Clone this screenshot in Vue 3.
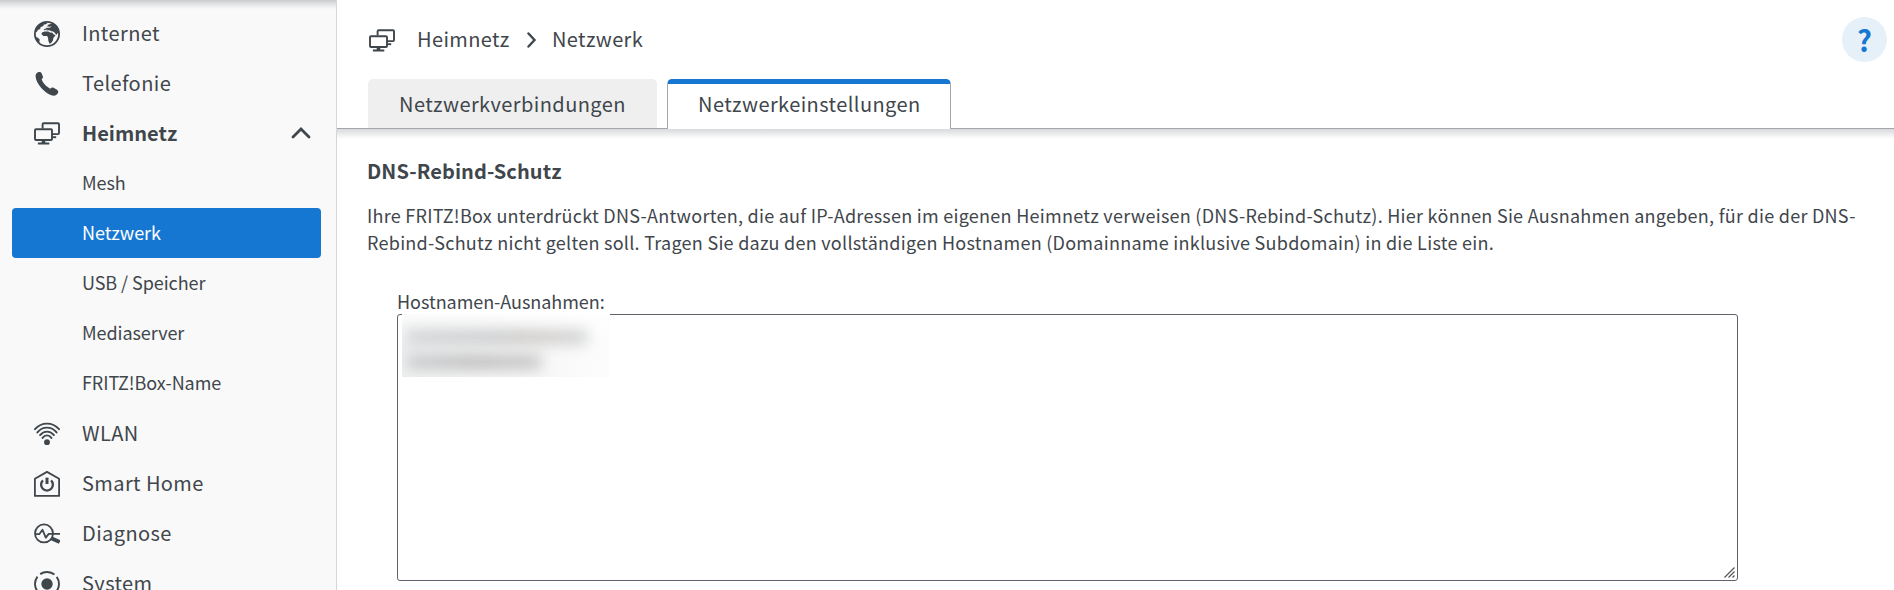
<script setup>
const before = [
  { label: 'Internet', icon: 'globe' },
  { label: 'Telefonie', icon: 'phone' },
  { label: 'Heimnetz', icon: 'screens', open: true },
]
const sub = ['Mesh', 'Netzwerk', 'USB / Speicher', 'Mediaserver', 'FRITZ!Box-Name']
const after = [
  { label: 'WLAN', icon: 'wifi' },
  { label: 'Smart Home', icon: 'home' },
  { label: 'Diagnose', icon: 'diagnose' },
  { label: 'System', icon: 'system' },
]
</script>

<template>
  <svg class="defs" width="0" height="0" aria-hidden="true">
    <symbol id="globe" viewBox="0 0 26 26">
      <circle cx="13" cy="13" r="12.1" fill="none" stroke="currentColor" stroke-width="1.8" />
      <path fill="currentColor" d="M3.2 5.7 7.2 2.3 11.5 1l2 1-1.5 1.3-2 .3-1 1.7-2.3.7-.5 2-2 .7L2.6 11 1 11.8zM1.2 15.8l2.7 1 1.8 1.8-.5 3.3-1.5-.7zM13.2 4l2.7-.8L19 1.6l3.6 3.1 2.3 4.4.5 3.7-2-.5-1.1 1.8-2.5-3.2-2.3-.4-1.6-1-2.4.3-1.4-.8-1.7.5-.7-1.3 2.8-1 .2-1.6 2.5.3z" />
      <path fill="currentColor" d="m8 11.6 2.700-1.200 3.500.2 1.800.8 2.400.300 1.600 2.100 1.700.200-2.300 3.100-.5 2.400-1.900 2.800-1.700.200-1-3-.2-2.700-1-1.800-3.800-.1L7.400 13z" />
      <path d="M10 9.400l3.100-.3 3 1 3.600 1 1.900 2.500" fill="none" stroke="#f9f9f9" stroke-width=".6" />
      <path d="m12.200 6.400 2.700.2 2.300-1" fill="none" stroke="#f9f9f9" stroke-width=".8" />
    </symbol>
    <symbol id="phone" viewBox="0 0 26 26">
      <path fill="currentColor" d="M2.200 2.800C3.800.6 6.600.3 7.700 2.400l1.200 3c.3 1.200-.3 1.900-1.300 2.900 1.200 3.600 4.600 7.400 8.600 9.400 1.200-1.100 2.200-1.600 3.400-1l3.400 2c1.800 1.200 1.700 3-.2 4.700-2 1.700-4.600 1.600-7.300.1C9.700 20.200 4.500 14.600 2.400 8.900 1.600 6.700 1.200 4.500 2.200 2.800z" />
    </symbol>
    <symbol id="screens" viewBox="0 0 26 26">
      <g fill="none" stroke="currentColor" stroke-width="1.9">
        <path d="M8.600 7.500V3.300q0-1 1-1h14.400q1 0 1 1v8.800q0 1-1 1h-5.700" />
        <rect x="1" y="8.300" width="17" height="10.700" rx="1" />
        <path d="M18.500 16.200h3.700" />
      </g>
      <path fill="currentColor" d="M7.700 19h3.600v2.500h4v1.900H3.900v-1.900h3.800z" />
    </symbol>
    <symbol id="wifi" viewBox="0 0 26 26">
      <circle cx="13" cy="21.200" r="2.900" fill="currentColor" />
      <g fill="none" stroke="currentColor" stroke-width="1.900" stroke-linecap="round">
        <path d="M1 8.200Q6 2.600 13 2.600T25 8.200M3.400 11.400Q7.200 6.600 13 6.600t9.600 4.800M6.100 14.100Q8.900 10.600 13 10.600t6.900 3.500M8.600 16.900q1.700-2.500 4.400-2.500t4.400 2.500" />
      </g>
    </symbol>
    <symbol id="home" viewBox="0 0 26 26">
      <g fill="none" stroke="currentColor" stroke-linejoin="round">
        <path stroke-width="1.800" d="M.9 7.700 13 .9l12.100 6.800v17.200H.9z" />
        <path stroke-width="2.300" d="M9 9.300a5.900 5.900 0 1 0 8 0" />
        <path stroke-width="3" d="M13 6.600v6.400" />
      </g>
    </symbol>
    <symbol id="diagnose" viewBox="0 0 26 26">
      <g fill="none" stroke="currentColor" stroke-width="1.800">
        <circle cx="10" cy="12.400" r="9" />
        <path stroke-linejoin="round" d="M1 13.200h4.200l3.300-4.400 3.300 7.800 2.900-3.700H26" />
        <path stroke-width="3.900" d="m17.200 17.200 8.500 3.700" />
      </g>
    </symbol>
    <symbol id="system" viewBox="0 0 26 26">
      <circle cx="13" cy="13" r="5.700" fill="currentColor" />
      <g fill="none" stroke="currentColor" stroke-width="1.900">
        <circle cx="13" cy="13" r="12" stroke-dasharray="15 3.850" stroke-dashoffset="-1.900" transform="rotate(-45 13 13)" />
      </g>
    </symbol>
  </svg>

  <div class="page">
    <nav class="sidebar">
      <a v-for="i in before" :key="i.label" class="item" :class="{ open: i.open }">
        <svg class="icon"><use :href="'#' + i.icon" /></svg>
        <span>{{ i.label }}</span>
        <svg v-if="i.open" class="caret" viewBox="0 0 20 12"><path d="M2 10 10 2l8 8" /></svg>
      </a>
      <a v-for="s in sub" :key="s" class="item sub" :class="{ selected: s === 'Netzwerk' }">{{ s }}</a>
      <a v-for="i in after" :key="i.label" class="item">
        <svg class="icon"><use :href="'#' + i.icon" /></svg>
        <span>{{ i.label }}</span>
      </a>
    </nav>

    <main class="main">
      <header class="head">
        <div class="crumbs">
          <svg class="icon"><use href="#screens" /></svg>
          <span class="crumb first">Heimnetz</span>
          <svg class="sep" viewBox="0 0 10 16"><path d="m1.500 1.500 6 6.500-6 6.500" /></svg>
          <span class="crumb">Netzwerk</span>
          <button class="help">?</button>
        </div>
        <div class="tabs">
          <a class="tab">Netzwerkverbindungen</a>
          <a class="tab active">Netzwerkeinstellungen</a>
        </div>
      </header>
      <section class="content">
        <h2>DNS-Rebind-Schutz</h2>
        <p>
          <span>Ihre FRITZ!Box unterdrückt DNS-Antworten, die auf IP-Adressen im eigenen Heimnetz verweisen (DNS-Rebind-Schutz). Hier können Sie Ausnahmen angeben, für die der DNS-</span><br>
          <span>Rebind-Schutz nicht gelten soll. Tragen Sie dazu den vollständigen Hostnamen (Domainname inklusive Subdomain) in die Liste ein.</span>
        </p>
        <div class="field">
          <label for="hosts">Hostnamen-Ausnahmen:</label>
          <div class="box">
            <textarea id="hosts"></textarea>
            <div class="veil"><i class="one"></i><i class="two"></i></div>
            <svg class="grip" viewBox="0 0 11 11"><path d="M.5 10.500l10-10M4.500 10.500l6-6M8.500 10.500l2-2" /></svg>
          </div>
        </div>
      </section>
    </main>
  </div>
</template>

<style>
body { overflow: hidden; background: #fff; }
</style>

<style scoped>
* { box-sizing: border-box; }
.defs { position: absolute; }
.page {
  display: flex;
  height: 590px;
  overflow: hidden;
  color: #3f464c;
  font-family: "Noto Sans CJK JP", "Noto Sans CJK SC", "Open Sans", sans-serif;
  font-size: 18px;
  white-space: nowrap;
}
.sidebar {
  flex: none;
  width: 337px;
  height: 590px;
  padding: 8px 15px 0 12px;
  border-right: 1px solid #d5d6d8;
  background: linear-gradient(#c9cacc, #e2e3e4 4px, #f9f9f9 9px);
  overflow: hidden;
}
.item {
  display: flex;
  align-items: center;
  height: 50px;
  padding: 0 0 2px 22px;
  font-size: 20px;
  letter-spacing: .4px;
}
.icon { flex: none; width: 26px; height: 26px; margin: 4px 22px 0 0; }
.open { font-weight: 700; letter-spacing: .03px; }
.caret { width: 20px; height: 12px; margin: 2px 10px 0 auto; }
.caret path, .sep path { fill: none; stroke: #3f464c; stroke-width: 2.800; stroke-linecap: round; }
.sub { padding-left: 70px; font-size: 18px; letter-spacing: -.07px; }
.selected { border-radius: 4px; background: #1677d2; color: #fff; }
.main { flex: 1; min-width: 0; }
.head { height: 129px; border-bottom: 1px solid #a3a6aa; }
.crumbs { display: flex; align-items: center; height: 79px; padding: 0 7px 0 32px; font-size: 20px; letter-spacing: .37px; }
.crumbs .icon { margin-top: 2px; }
.crumb { padding-bottom: 2px; }
.crumb.first { width: 110px; }
.sep { width: 10px; height: 16px; margin-right: 15px; }
.sep path { stroke-width: 2.400; }
.help {
  width: 45px;
  height: 45px;
  margin-left: auto;
  padding: 0;
  border: 0;
  border-radius: 50%;
  background: #e6f0f9;
  color: #1677d2;
  font: 700 29px/43px "Noto Sans CJK JP", sans-serif;
}
.tabs { display: flex; gap: 9px; height: 50px; padding-left: 31px; font-size: 20px; letter-spacing: .42px; }
.tab {
  width: 289px;
  height: 49px;
  padding-left: 31px;
  border-radius: 5px 5px 0 0;
  background: #efefef;
  line-height: 50px;
}
.tab.active {
  width: 284px;
  height: 50px;
  margin-left: 1px;
  padding-left: 30px;
  border: 1px solid #a3a6aa;
  border-width: 5px 1px 0;
  border-top-color: #1677d2;
  background: #fff;
  line-height: 40px;
}
.content { height: 461px; padding: 24px 0 0 30px; background: linear-gradient(#d9dadd, #fff 10px); }
h2 { margin: 0; font-size: 20px; line-height: 36px; font-weight: 700; letter-spacing: .07px; }
p { margin: 13px 0 0; line-height: 27px; letter-spacing: .267px; }
.field { display: flex; flex-direction: column; padding: 32px 0 0 30px; }
label { height: 26px; line-height: 27px; letter-spacing: -.05px; }
.box { position: relative; width: 1341px; height: 267px; }
textarea { display: block; width: 100%; height: 100%; margin: 0; border: 1px solid #62626c; border-radius: 3px; background: #fff; outline: 0; resize: none; }
.grip { position: absolute; right: 3px; bottom: 3px; width: 11px; height: 11px; }
.grip path { fill: none; stroke: #555; stroke-width: 1.2; }
.veil {
  position: absolute;
  top: 0;
  left: 5px;
  width: 208px;
  height: 63px;
  overflow: hidden;
  background: linear-gradient(#fffc, #fff0 50%), linear-gradient(90deg, #eff0f0, #f6f6f6 60%, #fdfdfd);
}
.veil i { position: absolute; left: 5px; height: 14px; filter: blur(7px); background: linear-gradient(90deg, #d0d3d5, #c8cacc 50%, #cdc9c6 65%, #d0d2d3); }
.one { top: 16px; width: 180px; }
.veil .two { top: 41px; width: 134px; background: linear-gradient(90deg, #c8ccce, #bebdbd 50%, #c6c6c6); }
</style>
